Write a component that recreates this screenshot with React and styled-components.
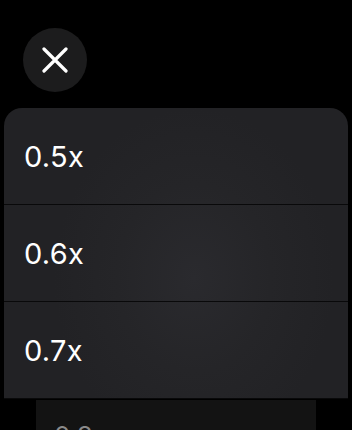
import React from "react";
import styled, { createGlobalStyle } from "styled-components";

const Global = createGlobalStyle`
  html, body { margin: 0; padding: 0; background: #000; }
  body { font-family: Inter, "Noto Sans", sans-serif; overflow: hidden; }
`;

const Page = styled.div`
  width: 352px;
  height: 430px;
  background: #000;
  display: flex;
  flex-direction: column;
  overflow: hidden;
  & > * { flex-shrink: 0; }
`;

const Header = styled.div`
  display: flex;
  padding: 28px 0 16px 23px;
`;

const CloseButton = styled.button`
  width: 64px;
  height: 64px;
  border-radius: 50%;
  border: none;
  padding: 0;
  background: #1c1c1d;
  display: flex;
  align-items: center;
  justify-content: center;
`;

const List = styled.div`
  margin: 0 4px;
  border-radius: 18px 18px 0 0;
  overflow: hidden;
  background:
    radial-gradient(ellipse 140px 170px at 190px 170px, #2a2a2e 0%, #252528 55%, rgba(34,34,37,0) 100%),
    #222225;
  display: flex;
  flex-direction: column;
`;

const Row = styled.div`
  box-sizing: border-box;
  height: 97px;
  flex-shrink: 0;
  border-bottom: 1px solid #09090a;
  display: flex;
  align-items: center;
  padding-left: 20px;
  color: #fff;
  font-size: 29px;
  font-weight: 400;
  letter-spacing: 0.3px;
`;

const Trailing = styled.div`
  margin: 1px 36px 0;
  height: 60px;
  background: #131313;
  color: #8a8a8a;
  font-size: 26px;
  line-height: 1;
  padding: 23px 0 0 18px;
  box-sizing: border-box;
`;

const speeds = ["0.5x", "0.6x", "0.7x"];

export default function App() {
  return (
    <>
      <Global />
      <Page>
        <Header>
          <CloseButton aria-label="Close">
            <svg width="26" height="26" viewBox="0 0 26 26">
              <path d="M2 2 L24 24 M24 2 L2 24" stroke="#fff" strokeWidth="3.2" strokeLinecap="round" />
            </svg>
          </CloseButton>
        </Header>
        <List>
          {speeds.map((s) => (
            <Row key={s}>{s}</Row>
          ))}
        </List>
        <Trailing>0.8x</Trailing>
      </Page>
    </>
  );
}
